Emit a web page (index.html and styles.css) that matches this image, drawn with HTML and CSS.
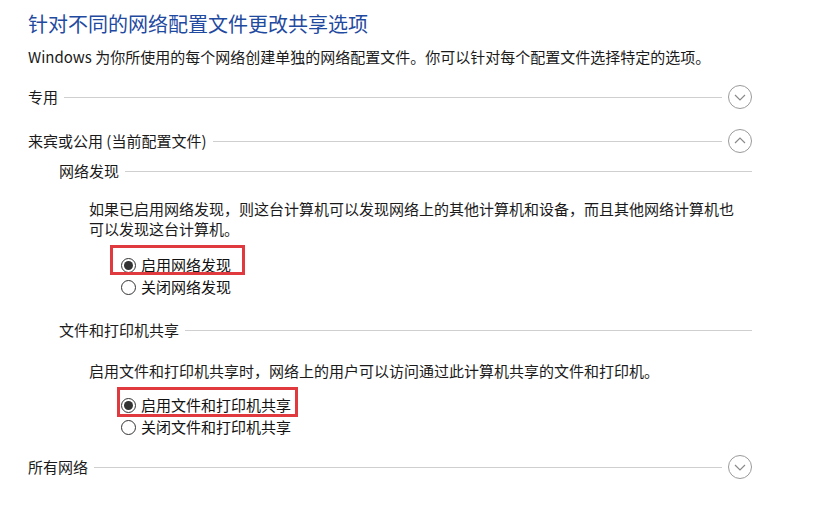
FILE: index.html
```html
<!DOCTYPE html>
<html lang="zh-CN">
<head>
<meta charset="utf-8">
<title>高级共享设置</title>
<link rel="stylesheet" href="styles.css">
</head>
<body>
<div class="page">
  <h1 class="title">针对不同的网络配置文件更改共享选项</h1>
  <p class="intro">Windows 为你所使用的每个网络创建单独的网络配置文件。你可以针对每个配置文件选择特定的选项。</p>

  <div class="group-row">
    <span class="group-label">专用</span>
    <span class="rule"></span>
    <span class="toggle">
      <svg width="24" height="24" viewBox="0 0 24 24"><circle cx="12" cy="12" r="11.5" fill="none" stroke="#9a9a9a" stroke-width="1"/><path d="M7 10 L12 15 L17 10" fill="none" stroke="#8a8a8a" stroke-width="1.2"/></svg>
    </span>
  </div>

  <div class="group-row group-open">
    <span class="group-label">来宾或公用 (当前配置文件)</span>
    <span class="rule"></span>
    <span class="toggle">
      <svg width="24" height="24" viewBox="0 0 24 24"><circle cx="12" cy="12" r="11.5" fill="none" stroke="#9a9a9a" stroke-width="1"/><path d="M7 14 L12 9 L17 14" fill="none" stroke="#8a8a8a" stroke-width="1.2"/></svg>
    </span>
  </div>

  <div class="section">
    <div class="sub-row">
      <span class="sub-label">网络发现</span>
      <span class="rule"></span>
    </div>
    <p class="desc desc-wrap">如果已启用网络发现，则这台计算机可以发现网络上的其他计算机和设备，而且其他网络计算机也可以发现这台计算机。</p>
    <div class="radios radios-1">
      <label class="radio-row">
        <span class="radio checked"></span><span>启用网络发现</span>
        <span class="mark mark-1"></span>
      </label>
      <label class="radio-row">
        <span class="radio"></span><span>关闭网络发现</span>
      </label>
    </div>

    <div class="sub-row sub-row-2">
      <span class="sub-label">文件和打印机共享</span>
      <span class="rule"></span>
    </div>
    <p class="desc desc-2">启用文件和打印机共享时，网络上的用户可以访问通过此计算机共享的文件和打印机。</p>
    <div class="radios radios-2">
      <label class="radio-row">
        <span class="radio checked"></span><span>启用文件和打印机共享</span>
        <span class="mark mark-2"></span>
      </label>
      <label class="radio-row">
        <span class="radio"></span><span>关闭文件和打印机共享</span>
      </label>
    </div>
  </div>

  <div class="group-row group-last">
    <span class="group-label">所有网络</span>
    <span class="rule"></span>
    <span class="toggle">
      <svg width="24" height="24" viewBox="0 0 24 24"><circle cx="12" cy="12" r="11.5" fill="none" stroke="#9a9a9a" stroke-width="1"/><path d="M7 10 L12 15 L17 10" fill="none" stroke="#8a8a8a" stroke-width="1.2"/></svg>
    </span>
  </div>
</div>
</body>
</html>
```

FILE: styles.css
```css
* { box-sizing: border-box; }
html, body { margin: 0; padding: 0; background: #ffffff; }
body {
  font-family: "Noto Sans CJK SC", "Noto Sans", sans-serif;
  color: #1a1a1a;
  font-size: 15px;
}
.page {
  width: 752px;
  padding: 10px 0 0 28px;
}
.title {
  margin: 0;
  font-size: 20px;
  line-height: 28px;
  font-weight: normal;
  color: #1f4aa0;
}
.intro {
  margin: 9px 0 0 0;
  line-height: 20px;
  white-space: nowrap;
}
.group-row {
  display: flex;
  align-items: center;
  height: 24px;
  margin-top: 18px;
}
.group-open { margin-top: 20px; }
.group-last { margin-top: 17px; }
.group-label { line-height: 20px; white-space: nowrap; }
.rule {
  flex: 1;
  height: 1px;
  background: #cfcfcf;
  margin: 0 6px;
}
.toggle { display: flex; width: 24px; height: 24px; }
.section { padding-left: 31px; }
.sub-row {
  display: flex;
  align-items: center;
  height: 20px;
  margin-top: 8px;
}
.sub-row .rule { margin-right: 0; }
.sub-row-2 { margin-top: 22px; }
.sub-label { line-height: 20px; white-space: nowrap; }
.desc {
  margin: 18px 0 0 30px;
  line-height: 20px;
}
.desc-wrap { width: 650px; }
.desc-2 { margin-top: 21px; white-space: nowrap; }
.radios { margin-left: 62px; }
.radios-1 { margin-top: 15px; }
.radios-2 { margin-top: 13px; }
.radio-row {
  position: relative;
  display: flex;
  align-items: center;
  height: 22px;
  line-height: 20px;
  color: #111;
}
.radio {
  width: 15px;
  height: 15px;
  border: 1px solid #333333;
  border-radius: 50%;
  margin-right: 5px;
  display: flex;
  align-items: center;
  justify-content: center;
  background: #fff;
}
.radio.checked::after {
  content: "";
  width: 9px;
  height: 9px;
  border-radius: 50%;
  background: #333333;
}
.mark {
  position: absolute;
  border: 3px solid #e03a3e;
  height: 30px;
}
.mark-1 { left: -11px; top: -9px; width: 135px; }
.mark-2 { left: -4px; top: -7px; width: 181px; }
```
